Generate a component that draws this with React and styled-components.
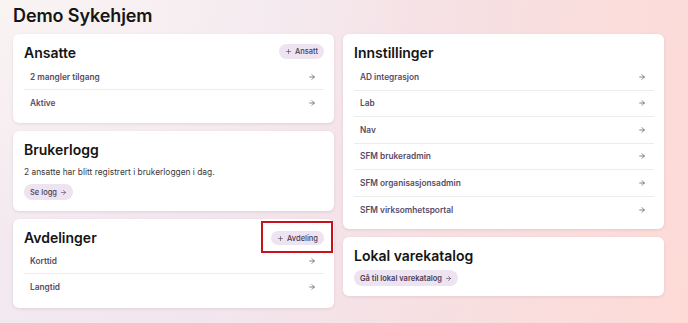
import React from "react";
import styled, { createGlobalStyle } from "styled-components";
import { ArrowRight, Plus } from "lucide-react";

const GlobalStyle = createGlobalStyle`
  html, body {
    margin: 0;
    padding: 0;
  }
  body {
    font-family: Inter, "Noto Sans", sans-serif;
    width: 688px;
    height: 323px;
    overflow: hidden;
    background:
      radial-gradient(ellipse 420px 260px at 0% 0%, rgba(250, 244, 243, 0.95), rgba(250, 244, 243, 0) 100%),
      linear-gradient(100deg, #f3e9f0 0%, #f2e6ee 35%, #f8dfe0 70%, #fddad6 100%);
  }
`;

const Page = styled.div`
  padding: 6px 24px 0 13px;
`;

const Title = styled.h1`
  margin: 0 0 8px;
  font-size: 18px;
  line-height: 20px;
  font-weight: 600;
  color: #151515;
  letter-spacing: -0.1px;
`;

const Columns = styled.div`
  display: grid;
  grid-template-columns: 321px 321px;
  column-gap: 9px;
  align-items: start;
`;

const Column = styled.div`
  display: flex;
  flex-direction: column;
  gap: 8px;
`;

const Card = styled.section`
  display: flex;
  flex-direction: column;
  align-items: stretch;
  background: #fff;
  border-radius: 6px;
  box-shadow: 0 1px 3px rgba(90, 60, 90, 0.12);
  padding: 10px 10px ${(p) => p.$bottom || 7}px 11px;
`;

const CardHeader = styled.div`
  display: flex;
  align-items: center;
  justify-content: space-between;
  height: 18px;
  margin-bottom: ${(p) => p.$gap ?? 2}px;
`;

const Heading = styled.h2`
  margin: 0;
  font-size: 14px;
  line-height: 18px;
  font-weight: 600;
  color: #141414;
`;

const List = styled.div`
  display: flex;
  flex-direction: column;
`;

const Row = styled.div`
  display: flex;
  align-items: center;
  justify-content: space-between;
  height: ${(p) => p.$h || 26}px;
  padding: 0 8px 0 6px;
  border-bottom: 1px solid #ececec;
  box-sizing: border-box;
  font-size: 8.3px;
  font-weight: 600;
  color: #5a4b66;
  &:last-child {
    border-bottom: none;
  }
`;

const Arrow = styled(ArrowRight)`
  color: #4e4555;
  flex: none;
`;

const Pill = styled.span`
  display: flex;
  align-self: flex-start;
  align-items: center;
  gap: 3px;
  height: ${(p) => p.$h || 16}px;
  padding: 0 6px;
  border-radius: 999px;
  background: #eee3f1;
  color: #4a3d55;
  font-size: 7.5px;
  font-weight: ${(p) => (p.$bold ? 600 : 500)};
  white-space: nowrap;
`;

const Marked = styled.span`
  position: relative;
  display: flex;
  &::after {
    content: "";
    position: absolute;
    left: -10px;
    right: -9px;
    top: -10px;
    bottom: -8px;
    border: 2px solid #c8131f;
  }
`;

const Text = styled.p`
  margin: 7px 0 6px;
  font-size: 8.4px;
  line-height: 12px;
  color: #3a3a3a;
`;

const settings = [
  "AD integrasjon",
  "Lab",
  "Nav",
  "SFM brukeradmin",
  "SFM organisasjonsadmin",
  "SFM virksomhetsportal",
];

const LinkRow = ({ label, h }) => (
  <Row $h={h}>
    <span>{label}</span>
    <Arrow size={8} strokeWidth={2} />
  </Row>
);

export default function App() {
  return (
    <>
      <GlobalStyle />
      <Page>
        <Title>Demo Sykehjem</Title>
        <Columns>
          <Column>
            <Card>
              <CardHeader>
                <Heading>Ansatte</Heading>
                <Pill $h={15}>
                  <Plus size={7} strokeWidth={2} />
                  Ansatt
                </Pill>
              </CardHeader>
              <List>
                <LinkRow label="2 mangler tilgang" />
                <LinkRow label="Aktive" />
              </List>
            </Card>
            <Card $bottom={11}>
              <CardHeader $gap={0}>
                <Heading>Brukerlogg</Heading>
              </CardHeader>
              <Text>2 ansatte har blitt registrert i brukerloggen i dag.</Text>
              <Pill>
                Se logg
                <ArrowRight size={7} strokeWidth={2} />
              </Pill>
            </Card>
            <Card $bottom={8}>
              <CardHeader $gap={1}>
                <Heading>Avdelinger</Heading>
                <Marked>
                  <Pill $h={14}>
                    <Plus size={7} strokeWidth={2} />
                    Avdeling
                  </Pill>
                </Marked>
              </CardHeader>
              <List>
                <LinkRow label="Korttid" />
                <LinkRow label="Langtid" />
              </List>
            </Card>
          </Column>
          <Column>
            <Card $bottom={6}>
              <CardHeader>
                <Heading>Innstillinger</Heading>
              </CardHeader>
              <List>
                {settings.map((s) => (
                  <LinkRow key={s} label={s} h={26.5} />
                ))}
              </List>
            </Card>
            <Card $bottom={10}>
              <CardHeader $gap={5}>
                <Heading>Lokal varekatalog</Heading>
              </CardHeader>
              <Pill $bold>
                Gå til lokal varekatalog
                <ArrowRight size={7} strokeWidth={2} />
              </Pill>
            </Card>
          </Column>
        </Columns>
      </Page>
    </>
  );
}
